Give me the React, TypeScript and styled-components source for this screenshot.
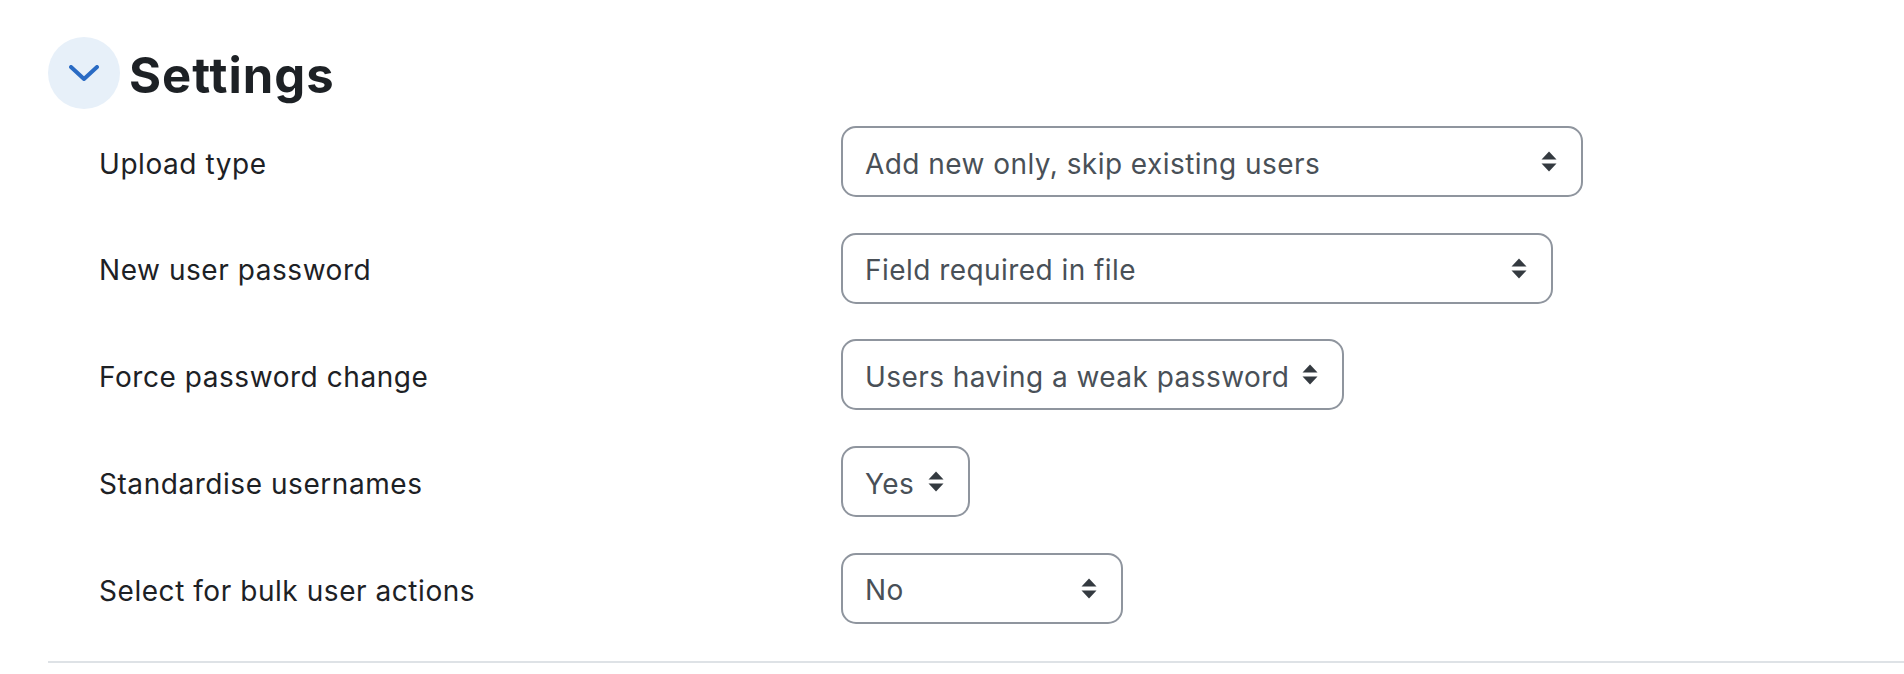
import React from "react";
import styled, { createGlobalStyle } from "styled-components";

const GlobalStyle = createGlobalStyle`
  html, body {
    margin: 0;
    padding: 0;
    background: #ffffff;
  }
  body {
    font-family: Inter, "Noto Sans", "Liberation Sans", sans-serif;
    color: #1d2125;
  }
`;

const Section = styled.section`
  margin-left: 48px;
  padding-top: 37px;
  display: flex;
  flex-direction: column;
`;

const Header = styled.div`
  display: flex;
  align-items: center;
  gap: 9px;
  height: 72px;
`;

const CollapseButton = styled.button`
  width: 72px;
  height: 72px;
  flex: none;
  border-radius: 50%;
  border: none;
  padding: 0;
  background: #e7f0f9;
  display: flex;
  align-items: center;
  justify-content: center;
  cursor: pointer;
`;

const Title = styled.h3`
  margin: 0;
  font-size: 49px;
  font-weight: 700;
  letter-spacing: 1px;
  color: #1d2125;
  line-height: 1.2;
  padding-top: 6px;
`;

const Form = styled.div`
  display: flex;
  flex-direction: column;
  gap: 35.7px;
  margin-top: 17px;
  padding-bottom: 37px;
  border-bottom: 2px solid #dee2e6;
`;

const Row = styled.div`
  display: grid;
  grid-template-columns: 793px auto;
  align-items: center;
`;

const Label = styled.label`
  padding-left: 51px;
  padding-top: 5px;
  font-size: 28px;
  letter-spacing: 0.55px;
  color: #1d2125;
  line-height: 1.3;
`;

const SelectBox = styled.div<{ $width: number }>`
  box-sizing: border-box;
  width: ${(p) => p.$width}px;
  height: 71px;
  border: 2px solid #8f959e;
  border-radius: 15px;
  background: #ffffff;
  display: flex;
  align-items: center;
  justify-content: space-between;
  padding: 0 24px 0 22px;
  font-size: 28px;
  letter-spacing: 0.45px;
  color: #495057;
`;

const Value = styled.span`
  white-space: nowrap;
  padding-top: 4px;
`;

const Caret = () => (
  <svg width="16" height="21" viewBox="0 0 16 21" aria-hidden="true">
    <path d="M8 0.5 L15.5 8.5 L0.5 8.5 Z" fill="#343a40" />
    <path d="M0.5 12.5 L15.5 12.5 L8 20.5 Z" fill="#343a40" />
  </svg>
);

const Chevron = () => (
  <svg width="30" height="16" viewBox="0 0 30 16" aria-hidden="true">
    <path
      d="M2 2 L15 14 L28 2"
      fill="none"
      stroke="#2a6bc4"
      strokeWidth="4"
      strokeLinecap="round"
      strokeLinejoin="round"
    />
  </svg>
);

const fields = [
  { label: "Upload type", value: "Add new only, skip existing users", width: 742 },
  { label: "New user password", value: "Field required in file", width: 712 },
  { label: "Force password change", value: "Users having a weak password", width: 503 },
  { label: "Standardise usernames", value: "Yes", width: 129 },
  { label: "Select for bulk user actions", value: "No", width: 282 },
];

export default function App() {
  return (
    <>
      <GlobalStyle />
      <Section>
        <Header>
          <CollapseButton aria-label="Collapse">
            <Chevron />
          </CollapseButton>
          <Title>Settings</Title>
        </Header>
        <Form>
          {fields.map((f) => (
            <Row key={f.label}>
              <Label>{f.label}</Label>
              <SelectBox $width={f.width}>
                <Value>{f.value}</Value>
                <Caret />
              </SelectBox>
            </Row>
          ))}
        </Form>
      </Section>
    </>
  );
}
